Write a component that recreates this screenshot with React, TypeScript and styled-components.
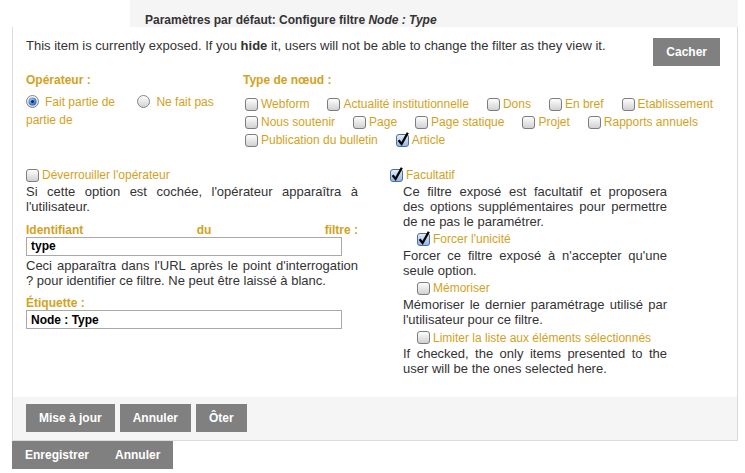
import styled, { createGlobalStyle } from "styled-components"
import { useId } from "react"

const GlobalStyle = createGlobalStyle`
    body {
        margin: 0;
        background: #fff;
        font-family: "Liberation Sans", Arial, sans-serif;
        font-size: 13px;
        color: #333;
    }
`

const gold = "#d2a21d"

const Box = ({ checked }: { checked?: boolean }) => {
    const id = useId().replace(/:/g, "")
    return (
        <BoxSvg width="13" height="13" viewBox="0 0 13 13">
            <defs>
                <linearGradient id={`g${id}`} x1="0" y1="0" x2="0" y2="1">
                    <stop offset="0" stopColor={checked ? "#e4effb" : "#ffffff"} />
                    <stop offset="1" stopColor={checked ? "#8fb6e6" : "#cfcfcf"} />
                </linearGradient>
            </defs>
            <rect x="0.5" y="0.5" width="12" height="12" rx="2.5" fill={`url(#g${id})`} stroke={checked ? "#4f6f99" : "#7d7d7d"} />
            {checked && <path d="M2.6 6.2 L5.6 10 L11.8 -1.2" fill="none" stroke="#000" strokeWidth="2.3" strokeLinejoin="miter" />}
        </BoxSvg>
    )
}

const Radio = ({ checked, spaced }: { checked?: boolean; spaced?: boolean }) => {
    const id = useId().replace(/:/g, "")
    return (
        <RadioSvg width="13" height="13" viewBox="0 0 13 13" $spaced={spaced}>
            <defs>
                <linearGradient id={`r${id}`} x1="0" y1="0" x2="0" y2="1">
                    <stop offset="0" stopColor="#ffffff" />
                    <stop offset="1" stopColor="#d0d0d0" />
                </linearGradient>
                <radialGradient id={`d${id}`} cx="0.4" cy="0.35" r="0.7">
                    <stop offset="0" stopColor="#9fd0ff" />
                    <stop offset="1" stopColor="#1d5fc0" />
                </radialGradient>
            </defs>
            <circle cx="6.5" cy="6.5" r="6" fill={`url(#r${id})`} stroke="#858585" />
            {checked && <circle cx="6.5" cy="6.5" r="4" fill={`url(#d${id})`} />}
            {checked && <circle cx="6.5" cy="6.5" r="1.6" fill="#0b2a5c" />}
        </RadioSvg>
    )
}

const BoxSvg = styled.svg`
    flex: none;
    overflow: visible;
    vertical-align: -2px;
`

const RadioSvg = styled(BoxSvg)<{ $spaced?: boolean }>`
    margin: 0 6px 0 ${p => (p.$spaced ? 19 : 0)}px;
`

const Page = styled.div`
    width: 726px;
    padding-left: 12px;
`

const Header = styled.div`
    margin-left: 118px;
    height: 27px;
    box-sizing: border-box;
    padding: 13px 0 0 15px;
    background: #f5f5f5;
    font-weight: 700;
    font-size: 12px;
    line-height: 14px;
    color: #333;
`

const Panel = styled.div`
    border-left: 1px solid #dcdcdc;
    border-right: 1px solid #d3dbdb;
    border-bottom: 1px solid #dcdcdc;
    background: #fff;
`

const Body = styled.div`
    padding: 11px 17px 20px 13px;
`

const ExposedRow = styled.div`
    display: flex;
    justify-content: space-between;
    align-items: flex-start;
`

const ExposedText = styled.div`
    line-height: 16px;
`

const Button = styled.button`
    height: 28px;
    padding: 0 13px;
    border: none;
    background: #808080;
    color: #fff;
    font-family: "Liberation Sans", Arial, sans-serif;
    font-weight: 700;
    font-size: 12px;
    cursor: pointer;
`

const TopGrid = styled.div`
    display: grid;
    grid-template-columns: 217px 1fr;
    margin-top: 6px;
`

const Label = styled.div`
    color: ${gold};
    font-weight: 700;
    font-size: 12px;
    line-height: 16px;
`

const RadioFlow = styled.div`
    width: 205px;
    margin-top: 5px;
    font-size: 12px;
    line-height: 18px;
    color: ${gold};
`

const TypeList = styled.div`
    display: flex;
    flex-wrap: wrap;
    column-gap: 18px;
    margin: 7px 0 0 2px;
    width: 480px;
`

const CheckItem = styled.label<{ $indent?: number; $nested?: boolean }>`
    display: flex;
    align-items: center;
    gap: 3px;
    height: 17px;
    font-size: 12px;
    color: ${gold};
    white-space: nowrap;
    padding-left: ${p => p.$indent || 0}px;
    margin-top: ${p => (p.$nested ? 1.5 : 0)}px;
`

const TypeItem = styled(CheckItem)`
    height: 18px;
`

const Lower = styled.div`
    display: grid;
    grid-template-columns: 332px 277px;
    column-gap: 32px;
    margin-top: 17.5px;
`

const Column = styled.div`
    display: flex;
    flex-direction: column;
`

const Desc = styled.div<{ $indent?: number }>`
    line-height: 15.3px;
    text-align: justify;
    padding-left: ${p => p.$indent || 0}px;
`

const FieldLabel = styled(Label)<{ $gap: number }>`
    display: flex;
    justify-content: space-between;
    margin-top: ${p => p.$gap}px;
    line-height: 14px;
`

const Input = styled.input`
    width: 316px;
    height: 19px;
    box-sizing: border-box;
    margin: 0 0 2px;
    padding: 0 4px;
    border: 1px solid #a9a9a9;
    font-family: "Liberation Sans", Arial, sans-serif;
    font-size: 12px;
    font-weight: 700;
    color: #000;
    outline: none;
`

const Footer = styled.div`
    display: flex;
    gap: 5px;
    padding: 7px 13px 8px;
    background: #f5f5f5;
`

const Actions = styled.div`
    display: flex;
`

export default function App() {
    const types: [string, boolean][] = [
        ["Webform", false],
        ["Actualité institutionnelle", false],
        ["Dons", false],
        ["En bref", false],
        ["Etablissement", false],
        ["Nous soutenir", false],
        ["Page", false],
        ["Page statique", false],
        ["Projet", false],
        ["Rapports annuels", false],
        ["Publication du bulletin", false],
        ["Article", true],
    ]

    return (
        <Page>
            <GlobalStyle />
            <Header>Paramètres par défaut: Configure filtre <i>Node : Type</i></Header>
            <Panel>
                <Body>
                    <ExposedRow>
                        <ExposedText>This item is currently exposed. If you <b>hide</b> it, users will not be able to change the filter as they view it.</ExposedText>
                        <Button>Cacher</Button>
                    </ExposedRow>
                    <TopGrid>
                        <div>
                            <Label>Opérateur :</Label>
                            <RadioFlow>
                                <Radio checked />Fait partie de <Radio spaced />Ne fait pas partie de
                            </RadioFlow>
                        </div>
                        <div>
                            <Label>Type de nœud :</Label>
                            <TypeList>
                                {types.map(([name, on]) => (
                                    <TypeItem key={name}><Box checked={on} />{name}</TypeItem>
                                ))}
                            </TypeList>
                        </div>
                    </TopGrid>
                    <Lower>
                        <Column>
                            <CheckItem><Box />Déverrouiller l'opérateur</CheckItem>
                            <Desc>Si cette option est cochée, l'opérateur apparaîtra à l'utilisateur.</Desc>
                            <FieldLabel $gap={8.5}><span>Identifiant</span><span>du</span><span>filtre :</span></FieldLabel>
                            <Input defaultValue="type" />
                            <Desc>Ceci apparaîtra dans l'URL après le point d'interrogation ? pour identifier ce filtre. Ne peut être laissé à blanc.</Desc>
                            <FieldLabel $gap={8}>Étiquette :</FieldLabel>
                            <Input defaultValue="Node : Type" />
                        </Column>
                        <Column>
                            <CheckItem><Box checked />Facultatif</CheckItem>
                            <Desc $indent={13}>Ce filtre exposé est facultatif et proposera des options supplémentaires pour permettre de ne pas le paramétrer.</Desc>
                            <CheckItem $indent={27} $nested><Box checked />Forcer l'unicité</CheckItem>
                            <Desc $indent={13}>Forcer ce filtre exposé à n'accepter qu'une seule option.</Desc>
                            <CheckItem $indent={27} $nested><Box />Mémoriser</CheckItem>
                            <Desc $indent={13}>Mémoriser le dernier paramétrage utilisé par l'utilisateur pour ce filtre.</Desc>
                            <CheckItem $indent={27} $nested><Box />Limiter la liste aux éléments sélectionnés</CheckItem>
                            <Desc $indent={13}>If checked, the only items presented to the user will be the ones selected here.</Desc>
                        </Column>
                    </Lower>
                </Body>
                <Footer>
                    <Button>Mise à jour</Button>
                    <Button>Annuler</Button>
                    <Button>Ôter</Button>
                </Footer>
            </Panel>
            <Actions>
                <Button>Enregistrer</Button>
                <Button>Annuler</Button>
            </Actions>
        </Page>
    )
}
